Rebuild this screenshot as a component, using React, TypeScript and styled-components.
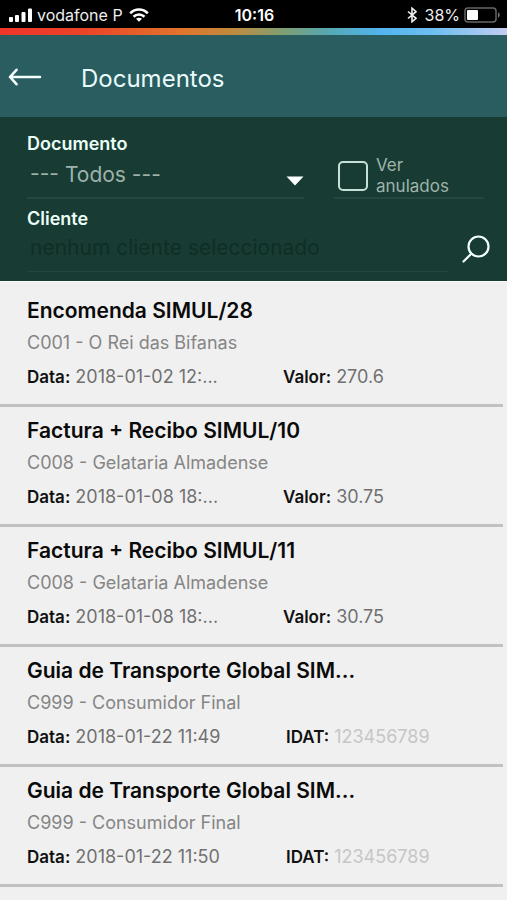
import React from "react";
import styled, { createGlobalStyle } from "styled-components";

const GlobalStyle = createGlobalStyle`
  *, *::before, *::after { box-sizing: border-box; }
  html, body { margin: 0; background: #f0f0f0; }
  body, button, input, select {
    font-family: Inter, "Liberation Sans", sans-serif;
    font-size: 18px;
    font-weight: 400;
  }
  h1, h2, p, ul, dl, dd { margin: 0; padding: 0; }
`;

const Screen = styled.div`
  display: flex;
  flex-direction: column;
  height: 100vh;
  overflow: hidden;
`;

const StatusBar = styled.div`
  display: grid;
  grid-template-columns: 1fr auto 1fr;
  align-items: center;
  flex: none;
  height: 28px;
  padding: 2px 7px 0 9px;
  background: #000;
  color: #eee;
  font-size: 16px;
  line-height: 24px;
`;

const StatusGroup = styled.div<{ $end?: boolean }>`
  display: flex;
  align-items: center;
  justify-content: ${({ $end }) => ($end ? "flex-end" : "flex-start")};
  gap: ${({ $end }) => ($end ? 4 : 5)}px;
  white-space: nowrap;
`;

const Carrier = styled.span`
  margin-right: 1px;
`;

const Charge = styled.span`
  margin-left: 4px;
`;

const Clock = styled.time`
  color: #fff;
  font-weight: 600;
`;

const Rainbow = styled.div`
  flex: none;
  height: 7px;
  background: linear-gradient(
    90deg,
    #f0352b 0%,
    #ec4228 16%,
    #e0752c 36%,
    #c08a3e 46%,
    #7f9f74 56%,
    #55a8b4 65%,
    #52b4ee 75%,
    #70bff0 86%,
    #c3cdef 100%
  );
`;

const Header = styled.header`
  display: flex;
  align-items: flex-start;
  gap: 39px;
  flex: none;
  height: 82px;
  padding: 28px 8px 0;
  background: #295d60;
`;

const IconButton = styled.button`
  display: flex;
  flex: none;
  padding: 0;
  border: 0;
  background: none;
  color: #f2fffc;
`;

const BackButton = styled(IconButton)`
  padding-top: 5px;
`;

const SearchButton = styled(IconButton)`
  padding-bottom: 6px;
`;

const Title = styled.h1`
  color: #e9fbfb;
  font-size: 24px;
  font-weight: 400;
  line-height: 32px;
`;

const Filters = styled.form`
  display: flex;
  flex-direction: column;
  gap: 8px;
  flex: none;
  height: 164px;
  padding: 15px 23px 0 27px;
  background: #183c33;
`;

const FilterRow = styled.div`
  display: grid;
  grid-template-columns: 277fr 150fr;
  gap: 30px;
  align-items: end;
`;

const FieldLabel = styled.label`
  display: block;
  color: #eafff8;
  font-size: 18px;
  font-weight: 600;
  line-height: 24px;
`;

const SelectBox = styled.div`
  display: flex;
  align-items: center;
  height: 43px;
  padding-top: 9px;
  border-bottom: 2px solid #23483f;
`;

const Select = styled.select`
  flex: 1;
  min-width: 0;
  height: 28px;
  margin-bottom: 14px;
  padding: 0 0 0 3px;
  border: 0;
  appearance: none;
  background: none;
  color: #9fb3ac;
  font-size: 21px;
`;

const CheckLabel = styled.label`
  display: flex;
  align-items: center;
  gap: 8px;
  height: 46px;
  padding: 2px 4px 0;
  border-bottom: 2px solid #23483f;
  color: #9fb3ac;
  font-size: 17px;
  line-height: 21px;
`;

const Checkbox = styled.input`
  flex: none;
  width: 30px;
  height: 30px;
  margin: 0;
  border: 2px solid #c5e0d7;
  border-radius: 5px;
  appearance: none;

  &:checked {
    background: #c5e0d7;
  }
`;

const ClientRow = styled.div`
  display: flex;
  align-items: center;
  justify-content: space-between;
  gap: 14px;
  margin-right: -6px;
`;

const ClientInput = styled.input`
  flex: 1;
  min-width: 0;
  height: 41px;
  padding: 0 0 8px 3px;
  border: 0;
  border-bottom: 1px solid #23483f;
  background: none;
  color: #102d26;
  font-size: 21px;

  &::placeholder {
    color: #102d26;
    opacity: 1;
  }
`;

const List = styled.ul`
  padding-top: 5px;
  border-top: 1px solid #fafafa;
  list-style: none;
`;

const Item = styled.li`
  height: 120px;
  margin-right: 4px;
  padding: 9px 0 0 27px;
  border-bottom: 3px solid #c1c1c1;
`;

const ItemTitle = styled.h2`
  color: #0a0a0a;
  font-size: 21px;
  font-weight: 600;
  line-height: 30px;
  white-space: nowrap;
`;

const Customer = styled.p`
  color: #858585;
  font-size: 18px;
  line-height: 34px;
`;

const Facts = styled.dl`
  display: grid;
  grid-template-columns: 256fr 220fr;
  line-height: 34px;
`;

const Fact = styled.div<{ $inset?: boolean }>`
  display: flex;
  gap: 5px;
  padding-left: ${({ $inset }) => ($inset ? 3 : 0)}px;
`;

const Term = styled.dt`
  color: #111;
  font-size: 17px;
  font-weight: 600;
`;

const Value = styled.dd<{ $faint?: boolean }>`
  color: ${({ $faint }) => ($faint ? "#c6c6c6" : "#707070")};
  font-size: 18px;
  white-space: nowrap;
`;

type Doc = {
  title: string;
  customer: string;
  date: string;
  label: "Valor" | "IDAT";
  value: string;
};

const docs: Doc[] = [
  { title: "Encomenda SIMUL/28", customer: "C001 - O Rei das Bifanas", date: "2018-01-02 12:...", label: "Valor", value: "270.6" },
  { title: "Factura + Recibo SIMUL/10", customer: "C008 - Gelataria Almadense", date: "2018-01-08 18:...", label: "Valor", value: "30.75" },
  { title: "Factura + Recibo SIMUL/11", customer: "C008 - Gelataria Almadense", date: "2018-01-08 18:...", label: "Valor", value: "30.75" },
  { title: "Guia de Transporte Global SIM...", customer: "C999 - Consumidor Final", date: "2018-01-22 11:49", label: "IDAT", value: "123456789" },
  { title: "Guia de Transporte Global SIM...", customer: "C999 - Consumidor Final", date: "2018-01-22 11:50", label: "IDAT", value: "123456789" },
];

const SignalIcon = () => (
  <svg width="23" height="14" viewBox="0 0 23 14" fill="#fff" aria-hidden="true">
    <rect x="0" y="9" width="4" height="5" rx="1" />
    <rect x="6" y="7" width="4" height="7" rx="1" />
    <rect x="12.5" y="4" width="4" height="10" rx="1" />
    <rect x="19" y="0.5" width="4" height="13.5" rx="1" />
  </svg>
);

const WifiIcon = () => (
  <svg width="20" height="14" viewBox="0 0 20 14" fill="none" stroke="#fff" strokeWidth="2.6" aria-hidden="true">
    <path d="M1.2 5.3C6.2 0.3 13.8 0.3 18.8 5.3" />
    <path d="M4.5 8.7C7.6 5.7 12.4 5.7 15.5 8.7" />
    <path d="M7 10.8C8.7 9.3 11.3 9.3 13 10.8L10 13.8Z" fill="#fff" stroke="none" />
  </svg>
);

const BluetoothIcon = () => (
  <svg width="10" height="16" viewBox="0 0 10 16" fill="none" stroke="#eee" strokeWidth="1.6" aria-hidden="true">
    <path d="M1 4.5L9 11.3L5 14.8V1.2L9 4.7L1 11.5" />
  </svg>
);

const BatteryIcon = () => (
  <svg width="36" height="16" viewBox="0 0 36 16" aria-hidden="true">
    <rect x="1" y="1" width="31" height="14" rx="3" fill="none" stroke="#666" strokeWidth="1.5" />
    <rect x="3" y="3" width="11" height="10" rx="1" fill="#fff" />
    <path d="M34 5.5C36.3 6 36.3 10 34 10.5Z" fill="#777" />
  </svg>
);

const BackIcon = () => (
  <svg width="34" height="18" viewBox="0 0 34 18" fill="none" stroke="currentColor" strokeWidth="2.6" strokeLinecap="round" strokeLinejoin="round" aria-hidden="true">
    <path d="M32 9H2M8.5 1.8L2 9L8.5 16.2" />
  </svg>
);

const CaretIcon = () => (
  <svg width="18" height="10" viewBox="0 0 18 10" fill="#fff" aria-hidden="true">
    <path d="M0.5 0.5H17.5L9 9.5Z" />
  </svg>
);

const SearchIcon = () => (
  <svg width="28" height="28" viewBox="0 0 28 28" fill="none" stroke="currentColor" strokeWidth="2.2" strokeLinecap="round" aria-hidden="true">
    <circle cx="16.5" cy="11.5" r="10" />
    <path d="M9.3 18.7L1.5 26.5" />
  </svg>
);

export default function App() {
  return (
    <Screen>
      <GlobalStyle />
      <StatusBar>
        <StatusGroup>
          <SignalIcon />
          <Carrier>vodafone P</Carrier>
          <WifiIcon />
        </StatusGroup>
        <Clock>10:16</Clock>
        <StatusGroup $end>
          <BluetoothIcon />
          <Charge>38%</Charge>
          <BatteryIcon />
        </StatusGroup>
      </StatusBar>
      <Rainbow />
      <Header>
        <BackButton type="button" aria-label="Voltar">
          <BackIcon />
        </BackButton>
        <Title>Documentos</Title>
      </Header>
      <Filters onSubmit={(event) => event.preventDefault()}>
        <FilterRow>
          <div>
            <FieldLabel htmlFor="document-type">Documento</FieldLabel>
            <SelectBox>
              <Select id="document-type">
                <option>--- Todos ---</option>
              </Select>
              <CaretIcon />
            </SelectBox>
          </div>
          <CheckLabel>
            <Checkbox type="checkbox" />
            <span>Ver anulados</span>
          </CheckLabel>
        </FilterRow>
        <div>
          <FieldLabel htmlFor="client">Cliente</FieldLabel>
          <ClientRow>
            <ClientInput id="client" placeholder="nenhum cliente seleccionado" />
            <SearchButton type="submit" aria-label="Procurar cliente">
              <SearchIcon />
            </SearchButton>
          </ClientRow>
        </div>
      </Filters>
      <List>
        {docs.map((doc, index) => (
          <Item key={index}>
            <ItemTitle>{doc.title}</ItemTitle>
            <Customer>{doc.customer}</Customer>
            <Facts>
              <Fact>
                <Term>Data:</Term>
                <Value>{doc.date}</Value>
              </Fact>
              <Fact $inset={doc.label === "IDAT"}>
                <Term>{doc.label}:</Term>
                <Value $faint={doc.label === "IDAT"}>{doc.value}</Value>
              </Fact>
            </Facts>
          </Item>
        ))}
      </List>
    </Screen>
  );
}
